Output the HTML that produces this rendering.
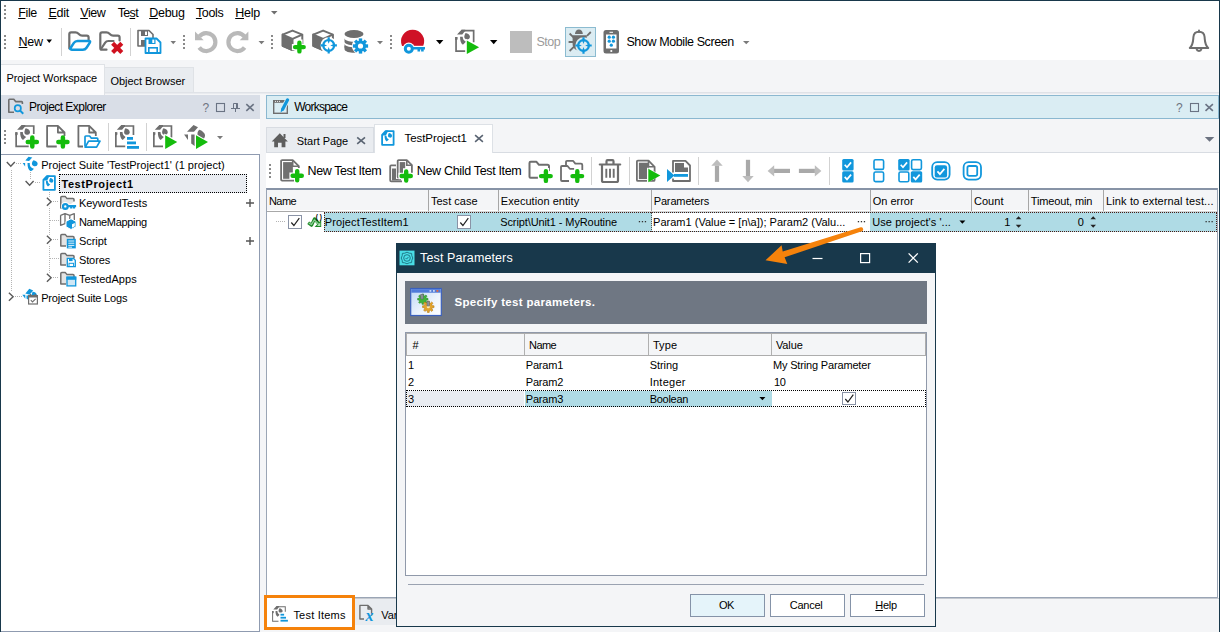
<!DOCTYPE html>
<html><head><meta charset="utf-8"><title>Test Parameters</title>
<style>
html,body{margin:0;padding:0;}
body{width:1220px;height:632px;position:relative;overflow:hidden;background:#fff;font-family:"Liberation Sans",sans-serif;font-size:12px;color:#000;}
.a{position:absolute;box-sizing:border-box;}
.t{position:absolute;white-space:nowrap;line-height:1;}
u{text-decoration:underline;text-decoration-thickness:1px;text-underline-offset:1px;}
svg{position:absolute;overflow:visible;left:0;top:0;}
</style></head><body>
<div id="main">
<div class="a" style="left:0px;top:0px;width:1220px;height:1px;background:#18384b;"></div>
<div class="a" style="left:0px;top:0px;width:1px;height:632px;background:#18384b;"></div>
<div class="a" style="left:1219px;top:0px;width:1px;height:632px;background:#18384b;"></div>
<div class="a" style="left:1px;top:60px;width:1218px;height:572px;background:#f4f5f7;"></div>
<div class="a" style="left:1px;top:64px;width:104px;height:31px;background:#fcfcfd;border:1px solid #dfe2e6;border-left:none;border-bottom:none;"></div>
<div class="a" style="left:105px;top:67px;width:89px;height:26px;background:#e9ecf0;border:1px solid #dfe2e6;border-left:none;border-bottom:none;"></div>
<div class="a" style="left:105px;top:92px;width:1114px;height:1px;background:#dfe2e7;"></div>
<div class="a" style="left:105px;top:93px;width:1114px;height:1px;background:#e9ebef;"></div>
<div class="a" style="left:1px;top:95px;width:259px;height:24px;background:#d9dee7;"></div>
<div class="a" style="left:1px;top:119px;width:259px;height:35px;background:#fff;"></div>
<div class="a" style="left:1px;top:154px;width:259px;height:478px;background:#fff;border:1px solid #8f9bb0;border-left:none;"></div>
<div class="a" style="left:59px;top:174px;width:188px;height:19px;background:#e9ecf1;border:1px dotted #000;"></div>
<div class="a" style="left:266px;top:95px;width:953px;height:24px;background:#daedf3;border:1px solid #8bb8d0;"></div>
<div class="a" style="left:266px;top:127px;width:108px;height:26px;background:#e9ecf0;border:1px solid #d8dce2;border-bottom:none;"></div>
<div class="a" style="left:266px;top:152px;width:953px;height:1px;background:#d8dce2;"></div>
<div class="a" style="left:266px;top:153px;width:953px;height:445px;background:#fff;"></div>
<div class="a" style="left:374px;top:124px;width:119px;height:29px;background:#fff;border:1px solid #dde1e6;border-bottom:none;"></div>
<div class="a" style="left:266px;top:188px;width:952px;height:410px;background:#fff;border:1px solid #9aa5b5;border-top:2px solid #8793a6;"></div>
<div class="a" style="left:267px;top:190px;width:950px;height:20px;background:#f4f5f7;"></div>
<div class="a" style="left:267px;top:210px;width:950px;height:1px;background:#fff;"></div>
<div class="a" style="left:267px;top:211px;width:57px;height:1px;background:#a8a8a8;"></div>
<div class="a" style="left:324px;top:211px;width:893px;height:1px;background:#d6d6d6;"></div>
<div class="a" style="left:428px;top:190px;width:1px;height:21px;background:#a6a6a6;"></div>
<div class="a" style="left:498px;top:190px;width:1px;height:21px;background:#a6a6a6;"></div>
<div class="a" style="left:651px;top:190px;width:1px;height:21px;background:#a6a6a6;"></div>
<div class="a" style="left:870px;top:190px;width:1px;height:21px;background:#a6a6a6;"></div>
<div class="a" style="left:971px;top:190px;width:1px;height:21px;background:#a6a6a6;"></div>
<div class="a" style="left:1028px;top:190px;width:1px;height:21px;background:#a6a6a6;"></div>
<div class="a" style="left:1103px;top:190px;width:1px;height:21px;background:#a6a6a6;"></div>
<div class="a" style="left:324px;top:212px;width:893px;height:20px;background:#afdbe5;"></div>
<div class="a" style="left:652px;top:213px;width:218px;height:18px;background:#fff;"></div>
<div class="a" style="left:324px;top:212px;width:893px;height:20px;border:1px dotted #4a1a12;"></div>
<div class="a" style="left:651px;top:212px;width:1px;height:20px;border-left:1px dotted #555;"></div>
<div class="a" style="left:288px;top:215px;width:14px;height:14px;background:#fff;border:1px solid #8a93a6;"></div>
<div class="a" style="left:457px;top:215px;width:14px;height:14px;background:#fff;border:1px solid #8a93a6;"></div>
<div class="a" style="left:266px;top:598px;width:953px;height:1px;background:#c5c9d0;"></div>
<div class="a" style="left:355px;top:599px;width:60px;height:26px;background:#e9ecf0;"></div>
<div class="a" style="left:266px;top:598px;width:89px;height:30px;background:#fff;"></div>
<svg width="1220" height="632" viewBox="0 0 1220 632">
<rect x="4" y="5" width="2" height="2" fill="#8a8a8a"/><rect x="4" y="9" width="2" height="2" fill="#8a8a8a"/><rect x="4" y="13" width="2" height="2" fill="#8a8a8a"/><rect x="4" y="17" width="2" height="2" fill="#8a8a8a"/>
<rect x="4" y="35" width="2" height="2" fill="#8a8a8a"/><rect x="4" y="39" width="2" height="2" fill="#8a8a8a"/><rect x="4" y="43" width="2" height="2" fill="#8a8a8a"/><rect x="4" y="47" width="2" height="2" fill="#8a8a8a"/>
<rect x="183" y="35" width="2" height="2" fill="#8a8a8a"/><rect x="183" y="39" width="2" height="2" fill="#8a8a8a"/><rect x="183" y="43" width="2" height="2" fill="#8a8a8a"/><rect x="183" y="47" width="2" height="2" fill="#8a8a8a"/>
<rect x="271" y="35" width="2" height="2" fill="#8a8a8a"/><rect x="271" y="39" width="2" height="2" fill="#8a8a8a"/><rect x="271" y="43" width="2" height="2" fill="#8a8a8a"/><rect x="271" y="47" width="2" height="2" fill="#8a8a8a"/>
<rect x="390" y="35" width="2" height="2" fill="#8a8a8a"/><rect x="390" y="39" width="2" height="2" fill="#8a8a8a"/><rect x="390" y="43" width="2" height="2" fill="#8a8a8a"/><rect x="390" y="47" width="2" height="2" fill="#8a8a8a"/>
<rect x="4" y="130" width="2" height="2" fill="#8a8a8a"/><rect x="4" y="134" width="2" height="2" fill="#8a8a8a"/><rect x="4" y="138" width="2" height="2" fill="#8a8a8a"/><rect x="4" y="142" width="2" height="2" fill="#8a8a8a"/>
<rect x="269" y="164" width="2" height="2" fill="#8a8a8a"/><rect x="269" y="168" width="2" height="2" fill="#8a8a8a"/><rect x="269" y="172" width="2" height="2" fill="#8a8a8a"/><rect x="269" y="176" width="2" height="2" fill="#8a8a8a"/>
<rect x="61" y="28" width="1" height="28" fill="#d2d2d2"/>
<rect x="130" y="28" width="1" height="28" fill="#d2d2d2"/>
<rect x="108" y="123" width="1" height="28" fill="#d2d2d2"/>
<rect x="146" y="123" width="1" height="28" fill="#d2d2d2"/>
<rect x="591" y="157" width="1" height="28" fill="#d2d2d2"/>
<rect x="629" y="157" width="1" height="28" fill="#d2d2d2"/>
<rect x="698" y="157" width="1" height="28" fill="#d2d2d2"/>
<rect x="829" y="157" width="1" height="28" fill="#d2d2d2"/>
<path d="M271 11 H277.5 L274.25 14.5 Z" fill="#6e6e6e"/>
<path d="M46.5 39.5 H52 L49.25 43 Z" fill="#000"/>
<path d="M170.5 41 H176 L173.25 44.2 Z" fill="#7a7a7a"/>
<path d="M258.5 41 H264.5 L261.5 44.2 Z" fill="#7a7a7a"/>
<path d="M377 41 H383 L380 44.2 Z" fill="#7a7a7a"/>
<path d="M436 40 H443.4 L439.7 44.3 Z" fill="#000"/>
<path d="M490 40 H497.4 L493.7 44.3 Z" fill="#000"/>
<path d="M743 41 H749.5 L746.25 44.2 Z" fill="#7a7a7a"/>
<path d="M217 136 H223 L220 139.2 Z" fill="#7a7a7a"/>
<path d="M1204.8 137 H1214.3 L1209.55 141.8 Z" fill="#6b7280"/>
<path d="M959.4 220.5 H965.4 L962.4 223.7 Z" fill="#000"/>
<g fill="none" stroke-linecap="round" stroke-linejoin="round"><path d="M69.30 48.50 L69.30 34.20 Q69.30 32.40 71.10 32.40 L75.50 32.40 Q77.30 32.40 78.53 33.71 L79.07 34.29 Q80.30 35.60 82.10 35.60 L86.80 35.60 Q88.60 35.60 88.60 37.40 L88.60 40.00" stroke="#6e6e6e" stroke-width="2.200"/><path d="M71.80 49.70 Q69.40 49.70 70.72 47.70 L73.88 42.90 Q75.20 40.90 77.60 40.90 L88.60 40.90 Q91.00 40.90 89.68 42.90 L86.52 47.70 Q85.20 49.70 82.80 49.70 Z" stroke="#1197dc" stroke-width="2.500"/></g>
<g fill="none" stroke-linecap="round" stroke-linejoin="round"><path d="M106.50 49.70 L102.10 49.70 Q100.30 49.70 100.30 47.90 L100.30 34.20 Q100.30 32.40 102.10 32.40 L106.50 32.40 Q108.30 32.40 109.53 33.71 L110.07 34.29 Q111.30 35.60 113.10 35.60 L117.80 35.60 Q119.60 35.60 119.60 37.40 L119.60 40.50" stroke="#6e6e6e" stroke-width="2.200"/><path d="M101.00 49.00 L105.20 42.67 Q106.30 41.00 108.30 41.00 L113.50 41.00" stroke="#6e6e6e" stroke-width="2.200"/><path d="M112.600 43.300 L121.800 52.500 M121.800 43.300 L112.600 52.500" stroke="#d0111f" stroke-width="4.200" stroke-linecap="butt"/></g>

<g>
<path d="M138 30.500 H149 L153 34.500 V46 H138 Z" fill="#fff" stroke="#6e6e6e" stroke-width="1.600" stroke-linejoin="round"/>
<rect x="141" y="31" width="7" height="5" fill="#6e6e6e"/>
<rect x="145" y="31.600" width="2" height="3.400" fill="#fff"/>
<rect x="141" y="40" width="5" height="6" fill="#6e6e6e"/>
<path d="M145.500 38.500 H156.500 L160.500 42.500 V53 H145.500 Z" fill="#fff" stroke="#1197dc" stroke-width="1.800" stroke-linejoin="round"/>
<rect x="148.500" y="39" width="7" height="5" fill="#1197dc"/>
<rect x="152.300" y="39.600" width="2" height="3.400" fill="#fff"/>
<rect x="148.800" y="47.800" width="8.400" height="5" fill="#fff" stroke="#1197dc" stroke-width="1.600"/>
</g>
<g fill="none" stroke="#b9b9b9" stroke-width="4.200">
<path d="M199.400 36.400 A9 9 0 1 1 199.200 47.500"/>
<path d="M244.400 36.400 A9 9 0 1 0 244.600 47.500"/>
</g>
<path d="M195 31.600 V40.300 H203.700 Z" fill="#b9b9b9"/>
<path d="M248.400 31.600 V40.300 H239.700 Z" fill="#b9b9b9"/>

<g transform="translate(0 0)">
<path d="M292.500 30.600 L302.300 34.600 V45.800 L292.500 50 L282.700 45.800 V34.600 Z" fill="#fff" stroke="#6e6e6e" stroke-width="2" stroke-linejoin="round"/>
<path d="M282.700 34.600 L292.500 38.800 V50 L282.700 45.800 Z" fill="#6e6e6e" stroke="#6e6e6e" stroke-width="2" stroke-linejoin="round"/>
<path d="M292.500 38.800 L302.300 34.600" stroke="#6e6e6e" stroke-width="2"/>
</g>
<path d="M299.4 39.6 V54.6 M291.9 47.1 H306.9" stroke="#fff" stroke-width="6.4" fill="none"/><path d="M299.4 42.8 V51.4 M295.1 47.1 H303.7" stroke="#14bc0c" stroke-width="4.4" fill="none" stroke-linecap="round"/>
<g transform="translate(30.6 0)">
<path d="M292.500 30.600 L302.300 34.600 V45.800 L292.500 50 L282.700 45.800 V34.600 Z" fill="#fff" stroke="#6e6e6e" stroke-width="2" stroke-linejoin="round"/>
<path d="M282.700 34.600 L292.500 38.800 V50 L282.700 45.800 Z" fill="#6e6e6e" stroke="#6e6e6e" stroke-width="2" stroke-linejoin="round"/>
<path d="M292.500 38.800 L302.300 34.600" stroke="#6e6e6e" stroke-width="2"/>
</g>
<g transform="translate(328.7 45.4)"><circle r="8.200" fill="#fff"/>
<circle r="5.400" fill="none" stroke="#1197dc" stroke-width="2.200"/>
<path d="M-1.100 -8.200 H1.100 V-4.500 L0 -1.600 L-1.100 -4.500 Z M-1.100 8.200 H1.100 V4.500 L0 1.600 L-1.100 4.500 Z M-8.200 -1.100 V1.100 H-4.500 L-1.600 0 L-4.500 -1.100 Z M8.200 -1.100 V1.100 H4.500 L1.600 0 L4.500 -1.100 Z" fill="#1197dc"/></g>

<g>
<ellipse cx="354" cy="34" rx="9.500" ry="4" fill="#6e6e6e"/>
<path d="M344.500 38 c0 5 19 5 19 0 v3.500 c0 5 -19 5 -19 0z" fill="#6e6e6e"/>
<path d="M344.500 43.500 c0 5 19 5 19 0 v3.500 c0 5 -19 5 -19 0z" fill="#6e6e6e"/>
<path d="M344.500 49 c0 4 12 4.500 14 3 v-5 c-3 1.500 -14 1 -14 -1.500z" fill="#6e6e6e"/>
<circle cx="360.500" cy="46" r="8.600" fill="#fff"/>
<g transform="translate(360.500 46)" fill="#1197dc">
<circle r="5.600"/>
<rect x="-1.700" y="-7.600" width="3.400" height="15.200"/><rect x="-1.700" y="-7.600" width="3.400" height="15.200" transform="rotate(45)"/><rect x="-1.700" y="-7.600" width="3.400" height="15.200" transform="rotate(90)"/><rect x="-1.700" y="-7.600" width="3.400" height="15.200" transform="rotate(135)"/>
<circle r="2.600" fill="#fff"/>
</g>
</g>
<g>
<path d="M402 46 A11.600 11.600 0 1 1 423.200 46 Z" fill="#cf1126"/>
<circle cx="408.800" cy="48.800" r="6.200" fill="#fff"/><rect x="411" y="45.800" width="15.500" height="7" fill="#fff"/>
<circle cx="408.800" cy="48.800" r="3.500" fill="none" stroke="#1197dc" stroke-width="3"/>
<path d="M412.500 48.200 H425 M418.800 48.200 V51.600 M422.400 48.200 V51.600" stroke="#1197dc" stroke-width="2.600" fill="none"/>
</g>

<g transform="translate(455.2 29.8) scale(1)">
<path d="M10 21.300 H0.850 V7.200" fill="none" stroke="#6e6e6e" stroke-width="1.7"/>
<path d="M6.300 0.900 H18.450 V12.5" fill="none" stroke="#6e6e6e" stroke-width="1.7"/>
<path d="M1.800 4.700 L6.300 0 H10 V1.800 H9.400 L7.100 4.700 Z" fill="#6e6e6e"/>
<path d="M0 7.100 H2.400 V9.400 L1.700 10.200 H0 Z" fill="#6e6e6e"/>
<path d="M10.400 3.200 C12.600 3.500 14.800 5 14.800 7.300 A2.850 2.850 0 1 1 9.150 6.300 C9.400 5 9.900 4 10.400 3.200 Z" fill="#6e6e6e"/>
<path d="M4.900 7 L7.500 7 C7.500 9.300 8.600 11 10.800 12 L7.700 15 C5.600 13.600 4.700 10.400 4.900 7 Z" fill="#6e6e6e"/>
</g>
<path d="M465.800 38.800 L481 47.300 L465.800 55.800 Z" fill="#fff"/>
<path d="M466.8 40.5 L479.1 47.3 L466.8 54.1 Z" fill="#14bc0c"/>
<rect x="510" y="31" width="22" height="22" fill="#bdbdbd"/>
<rect x="565.500" y="27.500" width="30" height="29" fill="#dbecf2" stroke="#8bbbd0" stroke-width="1"/>
<g>
<path d="M575 33.900 a3.900 4.400 0 0 1 7.800 0z" fill="#6e6e6e"/>
<path d="M572.600 35.200 H586.800 V44 c0 9 -14.200 9 -14.200 0z" fill="#6e6e6e"/>
<path d="M568.600 42 H573 M569.600 33.500 L573.500 37.400 M569.600 51 L573.800 46.800 M590.800 32 L587 35.800" stroke="#6e6e6e" stroke-width="1.800" fill="none"/>
</g>
<g transform="translate(583.5 45.5)"><circle r="8.200" fill="#dbecf2"/>
<circle r="5.400" fill="none" stroke="#1197dc" stroke-width="2.200"/>
<path d="M-1.100 -8.200 H1.100 V-4.500 L0 -1.600 L-1.100 -4.500 Z M-1.100 8.200 H1.100 V4.500 L0 1.600 L-1.100 4.500 Z M-8.200 -1.100 V1.100 H-4.500 L-1.600 0 L-4.500 -1.100 Z M8.200 -1.100 V1.100 H4.500 L1.600 0 L4.500 -1.100 Z" fill="#1197dc"/></g>
<g>
<rect x="603.500" y="30" width="15.500" height="23.500" rx="2.500" fill="#6e6e6e"/>
<rect x="606" y="34.500" width="10.500" height="14" fill="#fff"/>
<rect x="609.500" y="31.800" width="3.500" height="1" fill="#fff"/>
<circle cx="611.300" cy="51" r="1.100" fill="#fff"/>
<g fill="#1197dc"><circle cx="609.200" cy="37.200" r="1.600"/><circle cx="613.400" cy="37.200" r="1.600"/><circle cx="609.200" cy="41.200" r="1.600"/><circle cx="613.400" cy="41.200" r="1.600"/><circle cx="611.300" cy="45.200" r="1.600"/></g>
</g>
<g fill="none" stroke="#6e6e6e" stroke-width="2" stroke-linejoin="round">
<path d="M1189.800 48 c3.500 -3.500 3.300 -7 3.600 -11 c0.300 -3.700 2.700 -5.200 5.600 -5.200 c2.900 0 5.300 1.500 5.600 5.200 c0.300 4 0.100 7.500 3.600 11 z"/>
<path d="M1199 32 V30.500" stroke-linecap="round"/>
<path d="M1196.500 49 a2.600 2.600 0 0 0 5 0" />
</g>
<g fill="none" stroke="#6a7383" stroke-width="1"><rect x="216.5" y="103.500" width="8" height="8" stroke-width="1.100"/><path d="M231 108.500 H240 M235.5 108.500 V112 M233.5 108 V103.500 H237.5 V108"/><path d="M237 103.500 V108" stroke-width="2"/><path d="M246.3 104.200 l7.400 6.600 M253.7 104.200 l-7.400 6.600" stroke-width="1.600"/></g>
<g fill="none" stroke="#6a7383" stroke-width="1"><rect x="1190.5" y="103.500" width="8" height="8" stroke-width="1.100"/><path d="M1205.5 104.200 l7.400 6.600 M1212.9 104.200 l-7.400 6.600" stroke-width="1.600"/></g>
<g fill="none" stroke-linejoin="round">
<path d="M14 112.300 H8.800 V100 a0.800 0.800 0 0 1 0.800 -0.800 H13.800 L15.600 101.600 H21.600 a0.800 0.800 0 0 1 0.800 0.800 V104" stroke="#6e6e6e" stroke-width="1.600"/>
<circle cx="17.800" cy="108.200" r="3.100" stroke="#1197dc" stroke-width="1.700"/>
<path d="M20.200 110.700 L23.300 113.700" stroke="#1197dc" stroke-width="1.900"/>
</g>
<g>
<rect x="273.700" y="100.700" width="13.600" height="12.600" fill="none" stroke="#6e6e6e" stroke-width="1.400"/>
<rect x="273" y="100" width="15" height="2.800" fill="#6e6e6e"/>
<path d="M275 101.400 h1 M277 101.400 h1 M279 101.400 h1" stroke="#fff" stroke-width="0.900"/>
<path d="M282.600 109.400 L287.600 99.800" stroke="#daedf3" stroke-width="5" stroke-linecap="round"/>
<path d="M282.800 109 L287.600 99.800" stroke="#1197dc" stroke-width="3.200" stroke-linecap="round"/>
<path d="M281.200 108.200 L284.200 109.800 L280.600 112.400 Z" fill="#1197dc"/>
</g>
<g transform="translate(15.3 125.1) scale(1)">
<path d="M13.4 21.300 H0.850 V7.200" fill="none" stroke="#6e6e6e" stroke-width="1.7"/>
<path d="M6.300 0.900 H18.450 V9" fill="none" stroke="#6e6e6e" stroke-width="1.7"/>
<path d="M1.800 4.700 L6.300 0 H10 V1.800 H9.400 L7.100 4.700 Z" fill="#6e6e6e"/>
<path d="M0 7.100 H2.400 V9.400 L1.700 10.200 H0 Z" fill="#6e6e6e"/>
<path d="M10.400 3.200 C12.600 3.500 14.800 5 14.800 7.300 A2.850 2.850 0 1 1 9.150 6.300 C9.400 5 9.900 4 10.400 3.200 Z" fill="#6e6e6e"/>
<path d="M4.900 7 L7.500 7 C7.500 9.300 8.600 11 10.800 12 L7.700 15 C5.600 13.600 4.700 10.400 4.900 7 Z" fill="#6e6e6e"/>
</g>
<path d="M32.3 137.45 V146.55 M27.75 142 H36.85" stroke="#14bc0c" stroke-width="4.5" fill="none" stroke-linecap="round"/>
<path d="M56.76 146.5 H47.1 V125.9 H57.9 L64.5 132.5 V136 M57.9 125.9 V132.5 H64.5" fill="none" stroke="#6e6e6e" stroke-width="1.8" stroke-linejoin="round"/>
<path d="M62.9 137.45 V146.55 M58.35 142 H67.45" stroke="#14bc0c" stroke-width="4.5" fill="none" stroke-linecap="round"/>
<path d="M83 146.5 H78.4 V125.9 H89.2 L95.8 132.5 V136 M89.2 125.9 V132.5 H95.8" fill="none" stroke="#6e6e6e" stroke-width="1.8" stroke-linejoin="round"/>
<g fill="#fff" stroke="#1197dc" stroke-width="1.700" stroke-linejoin="round">
<path d="M85 146.500 V136.800 a0.800 0.800 0 0 1 0.800 -0.800 H89.600 L91.400 138.200 H97 a0.800 0.800 0 0 1 0.800 0.800 V141"/>
<path d="M85.200 147.200 L88.600 141.200 H100 L96.600 147.200 Z"/>
</g>
<g transform="translate(115 125.1) scale(1)">
<path d="M10.5 21.300 H0.850 V7.200" fill="none" stroke="#6e6e6e" stroke-width="1.7"/>
<path d="M6.300 0.900 H18.450 V10" fill="none" stroke="#6e6e6e" stroke-width="1.7"/>
<path d="M1.800 4.700 L6.300 0 H10 V1.800 H9.400 L7.100 4.700 Z" fill="#6e6e6e"/>
<path d="M0 7.100 H2.400 V9.400 L1.700 10.200 H0 Z" fill="#6e6e6e"/>
<path d="M10.400 3.200 C12.600 3.500 14.800 5 14.800 7.300 A2.850 2.850 0 1 1 9.150 6.300 C9.400 5 9.900 4 10.400 3.200 Z" fill="#6e6e6e"/>
<path d="M4.900 7 L7.500 7 C7.500 9.300 8.600 11 10.800 12 L7.700 15 C5.600 13.600 4.700 10.400 4.900 7 Z" fill="#6e6e6e"/>
</g>
<rect x="125.500" y="135.500" width="15" height="14.500" fill="#fff"/>
<g fill="#1197dc"><rect x="127" y="137" width="6" height="2.800"/><rect x="127" y="141.500" width="9" height="2.800"/><rect x="127" y="146" width="12" height="2.800"/></g>
<g transform="translate(153 125.1) scale(1)">
<path d="M10 21.300 H0.850 V7.200" fill="none" stroke="#6e6e6e" stroke-width="1.7"/>
<path d="M6.300 0.900 H18.450 V12.5" fill="none" stroke="#6e6e6e" stroke-width="1.7"/>
<path d="M1.800 4.700 L6.300 0 H10 V1.800 H9.400 L7.100 4.700 Z" fill="#6e6e6e"/>
<path d="M0 7.100 H2.400 V9.400 L1.700 10.200 H0 Z" fill="#6e6e6e"/>
<path d="M10.400 3.200 C12.600 3.500 14.800 5 14.800 7.300 A2.850 2.850 0 1 1 9.150 6.300 C9.400 5 9.900 4 10.400 3.200 Z" fill="#6e6e6e"/>
<path d="M4.900 7 L7.500 7 C7.500 9.300 8.600 11 10.800 12 L7.700 15 C5.600 13.600 4.700 10.400 4.900 7 Z" fill="#6e6e6e"/>
</g>
<path d="M164.200 133.500 L179 142 L164.200 150.600 Z" fill="#fff"/>
<path d="M165.2 135.2 L177.2 142.1 L165.2 149 Z" fill="#14bc0c"/>
<g transform="translate(183.8 125) scale(1)" fill="#6e6e6e">
<path d="M3.200 6.800 L9.700 0 L14.200 2.300 L10.200 6.800 Z"/>
<path d="M0.300 9.400 H4.200 V15 Z"/>
<path d="M7.400 9.400 H10.800 V21 L7.400 18.500 Z"/>
<path d="M15.400 4.800 C17.800 5.200 21.200 8.200 21.200 10.400 C21.200 12.200 20.200 13.800 18.600 14.800 L13.600 9.600 C13.600 7.600 14.200 5.900 15.400 4.800 Z"/>
</g>
<path d="M195 133.500 L210 142 L195 150.600 Z" fill="#fff"/>
<path d="M196 135.2 L208 142.1 L196 149 Z" fill="#14bc0c"/>
<path d="M11.5 170 V291" stroke="#b4b4b4" stroke-width="1" stroke-dasharray="1 1" fill="none"/>
<path d="M16 163.5 H22" stroke="#b4b4b4" stroke-width="1" stroke-dasharray="1 1" fill="none"/>
<path d="M30.5 172 V180" stroke="#b4b4b4" stroke-width="1" stroke-dasharray="1 1" fill="none"/>
<path d="M35 182.5 H41" stroke="#b4b4b4" stroke-width="1" stroke-dasharray="1 1" fill="none"/>
<path d="M49.5 192 V277" stroke="#b4b4b4" stroke-width="1" stroke-dasharray="1 1" fill="none"/>
<path d="M53 201.5 H59" stroke="#b4b4b4" stroke-width="1" stroke-dasharray="1 1" fill="none"/>
<path d="M50 220.5 H59" stroke="#b4b4b4" stroke-width="1" stroke-dasharray="1 1" fill="none"/>
<path d="M53 239.5 H59" stroke="#b4b4b4" stroke-width="1" stroke-dasharray="1 1" fill="none"/>
<path d="M50 258.5 H59" stroke="#b4b4b4" stroke-width="1" stroke-dasharray="1 1" fill="none"/>
<path d="M53 277.5 H59" stroke="#b4b4b4" stroke-width="1" stroke-dasharray="1 1" fill="none"/>
<path d="M15 296.5 H22" stroke="#b4b4b4" stroke-width="1" stroke-dasharray="1 1" fill="none"/>
<rect x="6" y="160" width="10" height="9" fill="#fff"/>
<rect x="25" y="179" width="10" height="9" fill="#fff"/>
<path d="M6.8 162 l4 4.300 l4 -4.300" fill="none" stroke="#5a5a5a" stroke-width="1.400"/>
<path d="M25.6 181 l4 4.300 l4 -4.300" fill="none" stroke="#5a5a5a" stroke-width="1.400"/>
<rect x="46" y="196.8" width="7" height="10" fill="#fff"/>
<path d="M46.9 197.8 l4.200 4 l-4.200 4" fill="none" stroke="#5a5a5a" stroke-width="1.400"/>
<rect x="46" y="234.8" width="7" height="10" fill="#fff"/>
<path d="M46.9 235.8 l4.200 4 l-4.200 4" fill="none" stroke="#5a5a5a" stroke-width="1.400"/>
<rect x="46" y="272.8" width="7" height="10" fill="#fff"/>
<path d="M46.9 273.8 l4.200 4 l-4.200 4" fill="none" stroke="#5a5a5a" stroke-width="1.400"/>
<rect x="8" y="291.8" width="7" height="10" fill="#fff"/>
<path d="M8.9 292.8 l4.200 4 l-4.200 4" fill="none" stroke="#5a5a5a" stroke-width="1.400"/>
<g transform="translate(22.7 156.8)" fill="#1197dc">
<path d="M2.600 3.800 L5.800 0 L9.600 0.700 L6.300 4.100 Z"/>
<path d="M0 6.300 H2.400 V9.600 Z"/>
<path d="M4.800 6.200 H7.100 C6.900 9 7.600 10.500 11.200 12 C10.100 13.500 8.800 14.300 7.600 14.300 C5.500 13 4.800 10 4.800 6.200Z"/>
<path d="M10.800 3.500 C13 3.700 15 5.200 15 7.100 A2.850 2.850 0 1 1 9.300 6 C9.600 5 10.200 4.100 10.800 3.500Z"/>
</g>
<g transform="translate(42.5 175.2)">
<path d="M0.900 4.600 L4.400 0.900 H12.400 V14.600 H0.900 Z" fill="#fff" stroke="#1197dc" stroke-width="1.800" stroke-linejoin="round"/>
<path d="M0.400 5.200 L4.600 0.400 H7.200 L4.700 5.200 Z" fill="#1197dc"/>
<path d="M7.700 2.900 C9.400 3.100 10.900 4.200 10.900 5.700 A2.050 2.050 0 1 1 6.800 5 C7 4.200 7.300 3.500 7.700 2.900 Z" fill="#1197dc"/>
<path d="M3.400 5.600 L5.300 5.600 C5.300 7.300 6.100 8.500 7.700 9.300 L5.500 11.400 C4 10.400 3.300 8 3.400 5.600 Z" fill="#1197dc"/>
</g>
<path d="M66 207.9 H60.8 V197.4 a1 1 0 0 1 1 -1 H65.2 l1.800 2.200 H73 a1 1 0 0 1 1 1 V201.6" fill="#e4e4e4" stroke="#6e6e6e" stroke-width="1.500" stroke-linejoin="round"/>
<g><circle cx="65.300" cy="206.400" r="4.300" fill="#fff"/><rect x="67" y="204.200" width="9.800" height="5.200" fill="#fff"/><circle cx="65.300" cy="206.400" r="2.350" fill="none" stroke="#1197dc" stroke-width="2.300"/><path d="M68 206.100 H76.100 M71.200 206.100 V208.600 M74 206.100 V208.600" stroke="#1197dc" stroke-width="2.200" fill="none"/></g>
<g><path d="M60.600 215.300 L65 213.700 L69.800 215.300 L74.300 213.700 V220 M60.600 215.300 V225.300 L65 223.700 V213.700 M69.800 215.300 V219" fill="none" stroke="#6e6e6e" stroke-width="1.300" stroke-linejoin="round"/>
<path d="M66 221.400 L71 218.700 L76 221.400 V226.800 L71 229.500 L66 226.800 Z" fill="#1197dc" stroke="#fff" stroke-width="1"/>
<path d="M72 224.300 L74.800 222.900 V226.300 L72 227.800 Z" fill="#fff"/></g>
<path d="M66 245.9 H60.8 V235.4 a1 1 0 0 1 1 -1 H65.2 l1.800 2.200 H73 a1 1 0 0 1 1 1 V239.6" fill="#e4e4e4" stroke="#6e6e6e" stroke-width="1.500" stroke-linejoin="round"/>
<rect x="66.800" y="238.800" width="9" height="9.600" fill="#1197dc"/><path d="M68.300 241 H74.300 M68.300 243.200 H74.300 M68.300 245.400 H74.300 M68.300 247.200 H72" stroke="#fff" stroke-width="0.900"/>
<path d="M66 264.9 H60.8 V254.4 a1 1 0 0 1 1 -1 H65.2 l1.800 2.200 H73 a1 1 0 0 1 1 1 V258.6" fill="#e4e4e4" stroke="#6e6e6e" stroke-width="1.500" stroke-linejoin="round"/>
<path d="M67.300 258.300 H73.300 L75.300 260.300 V266.700 H67.300 Z" fill="#fff" stroke="#1197dc" stroke-width="1.300"/><rect x="69" y="258.500" width="3.600" height="2.600" fill="#1197dc"/><rect x="69" y="263.300" width="4.600" height="3.200" fill="none" stroke="#1197dc" stroke-width="1"/>
<path d="M66 283.9 H60.8 V273.4 a1 1 0 0 1 1 -1 H65.2 l1.800 2.200 H73 a1 1 0 0 1 1 1 V277.6" fill="#e4e4e4" stroke="#6e6e6e" stroke-width="1.500" stroke-linejoin="round"/>
<rect x="67" y="277.200" width="8.700" height="8.700" fill="#cfe7f5" stroke="#1197dc" stroke-width="1.300"/><rect x="66.400" y="276.600" width="9.900" height="3.200" fill="#1197dc"/>
<g fill="#1197dc"><path d="M25.400 293.400 L29.300 288.700 L33.200 290.500 L29.600 294.800 Z"/><path d="M22.300 294.700 H25.300 V298.800 Z"/><path d="M32.600 291.800 C35 292 36.800 293.400 37 295.200 H31.500 Z"/><path d="M26.500 295.600 H28.200 V299.800 L26.500 298.400Z"/></g>
<rect x="28.600" y="295.600" width="8.800" height="8.400" fill="#fff" stroke="#6e6e6e" stroke-width="1.200"/><path d="M28.600 296.400 H37.400" stroke="#6e6e6e" stroke-width="2.200"/><path d="M30.600 294 V296 M35.400 294 V296" stroke="#6e6e6e" stroke-width="1.300"/><path d="M30.800 300.200 L32.500 301.900 L35.600 298.800" fill="none" stroke="#6e6e6e" stroke-width="1.100"/>
<path d="M246 203 h8 M250 199 v8" stroke="#555" stroke-width="1.400" fill="none"/>
<path d="M246 241 h8 M250 237 v8" stroke="#555" stroke-width="1.400" fill="none"/>
<path d="M271.700 141.400 L279.800 133.200 L287.900 141.400 H285.400 V147.300 H281.600 V142.800 H278 V147.300 H274.200 V141.400 Z" fill="#5e5e5e"/><rect x="283.500" y="134" width="2" height="4" fill="#5e5e5e"/>
<path d="M357.2 137.3 l7.8 6.6 M365 137.3 l-7.8 6.6" stroke="#5a6472" stroke-width="1.6" fill="none"/>
<path d="M475.1 135.2 l7.8 6.6 M482.9 135.2 l-7.8 6.6" stroke="#5a6472" stroke-width="1.6" fill="none"/>
<g transform="translate(381.2 130.2)">
<path d="M0.900 4.600 L4.400 0.900 H12.400 V14.600 H0.900 Z" fill="#fff" stroke="#1197dc" stroke-width="1.800" stroke-linejoin="round"/>
<path d="M0.400 5.200 L4.600 0.400 H7.200 L4.700 5.200 Z" fill="#1197dc"/>
<path d="M7.700 2.900 C9.400 3.100 10.900 4.200 10.900 5.700 A2.050 2.050 0 1 1 6.800 5 C7 4.200 7.300 3.500 7.700 2.900 Z" fill="#1197dc"/>
<path d="M3.400 5.600 L5.300 5.600 C5.300 7.300 6.100 8.500 7.700 9.300 L5.500 11.400 C4 10.400 3.300 8 3.400 5.600 Z" fill="#1197dc"/>
</g>
<g transform="translate(280.2 159.2)"><path d="M1.900 0.900 H12.5 L18.6 7 V20.4 a1 1 0 0 1 -1 1 H1.900 a1 1 0 0 1 -1 -1 V1.900 a1 1 0 0 1 1 -1 Z" fill="#fff" stroke="#707070" stroke-width="1.800" stroke-linejoin="round"/>
<path d="M12.5 0.900 V7 H18.6" fill="none" stroke="#707070" stroke-width="1.600"/>
<rect x="2.900" y="2.900" width="9.75" height="16.7" fill="#707070"/></g>
<path d="M297.2 167.9 V183.5 M289.4 175.7 H305" stroke="#fff" stroke-width="6.4" fill="none"/><path d="M297.2 171.1 V180.3 M292.6 175.7 H301.8" stroke="#14bc0c" stroke-width="4.4" fill="none" stroke-linecap="round"/>
<path d="M396 165.400 H391.200 a1 1 0 0 0 -1 1 V180.300 a1 1 0 0 0 1 1 H402" fill="none" stroke="#707070" stroke-width="1.800" stroke-linejoin="round"/>
<path d="M392 168.500 h4 v10.500 h5 v1.600 h-9z" fill="#707070"/>
<g transform="translate(396.8 159.2)"><path d="M1.900 0.900 H10 L15.1 6 V17.6 a1 1 0 0 1 -1 1 H1.900 a1 1 0 0 1 -1 -1 V1.900 a1 1 0 0 1 1 -1 Z" fill="#fff" stroke="#707070" stroke-width="1.800" stroke-linejoin="round"/>
<path d="M10 0.900 V6 H15.1" fill="none" stroke="#707070" stroke-width="1.600"/>
<rect x="2.900" y="2.900" width="5.5" height="13.5" fill="#707070"/></g>
<path d="M406.2 168.2 V183.8 M398.4 176 H414" stroke="#fff" stroke-width="6.4" fill="none"/><path d="M406.2 171.4 V180.6 M401.6 176 H410.8" stroke="#14bc0c" stroke-width="4.4" fill="none" stroke-linecap="round"/>
<path d="M538.5 177.8 H530.5 a1 1 0 0 1 -1 -1 V163 a1.200 1.200 0 0 1 1.200 -1.200 H536.5 l2.500 3 H547.5 a1.500 1.500 0 0 1 1.500 1.500 V170.3" fill="none" stroke="#6e6e6e" stroke-width="2" stroke-linejoin="round" stroke-linecap="round"/>
<path d="M545.9 168.1 V184.1 M537.9 176.1 H553.9" stroke="#fff" stroke-width="6.4" fill="none"/><path d="M545.9 171.3 V180.9 M541.1 176.1 H550.7" stroke="#14bc0c" stroke-width="4.4" fill="none" stroke-linecap="round"/>
<path d="M566 165.500 V161.800 a1 1 0 0 1 1 -1 H573 l2.300 2.800 H581 a1.300 1.300 0 0 1 1.300 1.300 V170" fill="none" stroke="#6e6e6e" stroke-width="1.800" stroke-linejoin="round"/>
<path d="M569 181 H562 a1 1 0 0 1 -1 -1 V167 a1 1 0 0 1 1 -1 H567.500 l2.300 2.800 H577 a1.300 1.300 0 0 1 1.300 1.300 V171" fill="#fff" stroke="#6e6e6e" stroke-width="1.800" stroke-linejoin="round"/>
<path d="M577.3 168.1 V184.1 M569.3 176.1 H585.3" stroke="#fff" stroke-width="6.4" fill="none"/><path d="M577.3 171.3 V180.9 M572.5 176.1 H582.1" stroke="#14bc0c" stroke-width="4.4" fill="none" stroke-linecap="round"/>
<g fill="none" stroke="#6e6e6e" stroke-width="2.200" stroke-linejoin="round" stroke-linecap="round"><path d="M599.800 164.500 H620.200 M606.500 164 V161.200 a1 1 0 0 1 1 -1 H612.500 a1 1 0 0 1 1 1 V164"/><path d="M602 165 V180.500 a1.500 1.500 0 0 0 1.500 1.500 H616.500 a1.500 1.500 0 0 0 1.500 -1.500 V165"/><path d="M606.300 168.800 V177.800 M610 168.800 V177.800 M613.700 168.800 V177.800" stroke-width="1.900" stroke-linecap="butt"/></g>
<g transform="translate(636 159.8)"><path d="M1.900 0.900 H12.5 L18.6 7 V20.1 a1 1 0 0 1 -1 1 H1.900 a1 1 0 0 1 -1 -1 V1.900 a1 1 0 0 1 1 -1 Z" fill="#fff" stroke="#707070" stroke-width="1.800" stroke-linejoin="round"/>
<path d="M12.5 0.900 V7 H18.6" fill="none" stroke="#707070" stroke-width="1.600"/>
<rect x="2.900" y="2.900" width="9.75" height="16.4" fill="#707070"/></g>
<path d="M647 167.500 L661 175 L647 183 Z" fill="#fff"/>
<path d="M648.3 168.8 L660.3 175.55 L648.3 182.3 Z" fill="#14bc0c"/>
<g><path d="M673 160.900 H685.500 L690 165.500 V181 H673 Z" fill="#fff" stroke="#6e6e6e" stroke-width="1.800" stroke-linejoin="round"/><path d="M675 163 H684 V167.500 H688 V172 H675 Z" fill="#6e6e6e"/><rect x="670" y="172.500" width="18.500" height="6" fill="#fff"/><rect x="674" y="174" width="14" height="2.800" fill="#1197dc"/><path d="M667 169 L674.500 175.400 L667 182 Z" fill="#1197dc"/></g>
<rect x="714.900" y="165.500" width="4.200" height="16.400" fill="#a9a9a9"/><path d="M717 159.400 L722.700 165.800 H711.300 Z" fill="#bdbdbd"/>
<rect x="745.900" y="159.800" width="4.200" height="16.400" fill="#a9a9a9"/><path d="M748 182.300 L753.700 176 H742.300 Z" fill="#bdbdbd"/>
<rect x="774" y="168.800" width="16" height="4.200" fill="#a9a9a9"/><path d="M767.600 170.900 L774.200 165.300 V176.500 Z" fill="#bdbdbd"/>
<rect x="798.900" y="168.800" width="16" height="4.200" fill="#a9a9a9"/><path d="M821.400 170.900 L814.800 165.300 V176.500 Z" fill="#bdbdbd"/>
<rect x="842.2" y="159" width="11.4" height="11.4" rx="1.5" fill="#1197dc"/><path d="M844.708 164.7 l2.28 2.508 l4.104 -4.788" fill="none" stroke="#fff" stroke-width="1.700"/>
<rect x="842.2" y="171.2" width="11.4" height="11.4" rx="1.5" fill="#1197dc"/><path d="M844.708 176.9 l2.28 2.508 l4.104 -4.788" fill="none" stroke="#fff" stroke-width="1.700"/>
<rect x="874" y="159.8" width="9.6" height="9.6" rx="1.5" fill="#fff" stroke="#1197dc" stroke-width="1.600"/>
<rect x="874" y="172" width="9.6" height="9.6" rx="1.5" fill="#fff" stroke="#1197dc" stroke-width="1.600"/>
<rect x="898.2" y="159" width="11.4" height="11.4" rx="1.5" fill="#1197dc"/><path d="M900.708 164.7 l2.28 2.508 l4.104 -4.788" fill="none" stroke="#fff" stroke-width="1.700"/>
<rect x="911.6" y="159.8" width="9.8" height="9.8" rx="1.5" fill="#fff" stroke="#1197dc" stroke-width="1.600"/>
<rect x="899" y="172" width="9.8" height="9.8" rx="1.5" fill="#fff" stroke="#1197dc" stroke-width="1.600"/>
<rect x="910.8" y="171.2" width="11.4" height="11.4" rx="1.5" fill="#1197dc"/><path d="M913.308 176.9 l2.28 2.508 l4.104 -4.788" fill="none" stroke="#fff" stroke-width="1.700"/>
<rect x="932.200" y="162.200" width="17.400" height="17.400" rx="5" fill="#fff" stroke="#1197dc" stroke-width="1.800"/><rect x="934.7" y="165.2" width="12.4" height="12.4" rx="2.2" fill="#1197dc"/><path d="M937.428 171.4 l2.48 2.728 l4.464 -5.208" fill="none" stroke="#fff" stroke-width="1.700"/>
<rect x="963.600" y="162.200" width="17.400" height="17.400" rx="5" fill="#fff" stroke="#1197dc" stroke-width="1.800"/><rect x="967.400" y="166" width="9.800" height="9.800" rx="1.800" fill="#fff" stroke="#1197dc" stroke-width="1.800"/>
<path d="M276 221.5 H286" stroke="#b4b4b4" stroke-width="1" stroke-dasharray="1 1" fill="none"/>
<path d="M291.3 222.5 l2.600 3 l5.400 -7.400" fill="none" stroke="#222" stroke-width="1.200"/>
<path d="M460.3 222.5 l2.600 3 l5.400 -7.400" fill="none" stroke="#222" stroke-width="1.200"/>
<g><path d="M308.200 222.800 L311.600 225.200 L314.500 218.800 L318.600 223.400" fill="none" stroke="#1f8a27" stroke-width="3.200" stroke-linejoin="round"/>
<path d="M321.200 220 V226.900 H314.600 Z" fill="#1f8a27"/>
<path d="M308.800 223 L311.400 224.600 L314.400 219.800 L318.800 224.400" fill="none" stroke="#8fd098" stroke-width="1.200" stroke-linejoin="round"/>
<path d="M320.300 222.500 V226 H317 Z" fill="#b6e2bb"/>
<text x="315.800" y="218.600" font-size="6.500" font-family="Liberation Sans, sans-serif" fill="#000" font-weight="bold" style="letter-spacing:1.800px">()</text></g>
<g fill="#333"><rect x="638.8" y="221" width="1.300" height="1.300"/><rect x="641.8" y="221" width="1.300" height="1.300"/><rect x="644.8" y="221" width="1.300" height="1.300"/></g>
<g fill="#333"><rect x="857.8" y="221" width="1.300" height="1.300"/><rect x="860.8" y="221" width="1.300" height="1.300"/><rect x="863.8" y="221" width="1.300" height="1.300"/></g>
<g fill="#333"><rect x="1205.5" y="221" width="1.300" height="1.300"/><rect x="1208.5" y="221" width="1.300" height="1.300"/><rect x="1211.5" y="221" width="1.300" height="1.300"/></g>
<path d="M1015.8 219.200 l2.800 -3 l2.800 3z M1015.8 224.800 l2.800 3 l2.800 -3z" fill="#222"/>
<path d="M1090.4 219.200 l2.800 -3 l2.800 3z M1090.4 224.800 l2.800 3 l2.800 -3z" fill="#222"/>
<g transform="translate(272 606) scale(0.72)">
<path d="M9 21.300 H0.850 V7.200" fill="none" stroke="#6e6e6e" stroke-width="1.38889"/>
<path d="M6.300 0.900 H18.450 V8" fill="none" stroke="#6e6e6e" stroke-width="1.38889"/>
<path d="M1.800 4.700 L6.300 0 H10 V1.800 H9.400 L7.100 4.700 Z" fill="#6e6e6e"/>
<path d="M0 7.100 H2.400 V9.400 L1.700 10.200 H0 Z" fill="#6e6e6e"/>
<path d="M10.400 3.200 C12.600 3.500 14.800 5 14.800 7.300 A2.850 2.850 0 1 1 9.150 6.300 C9.400 5 9.900 4 10.400 3.200 Z" fill="#6e6e6e"/>
<path d="M4.900 7 L7.500 7 C7.500 9.300 8.600 11 10.800 12 L7.700 15 C5.600 13.600 4.700 10.400 4.900 7 Z" fill="#6e6e6e"/>
</g>
<rect x="279.500" y="612.500" width="9" height="9.500" fill="#fff"/><g fill="#1197dc"><rect x="280.500" y="613.800" width="3.600" height="1.800"/><rect x="280.500" y="616.800" width="5.500" height="1.800"/><rect x="280.500" y="619.800" width="7.400" height="1.800"/></g>
<path d="M364 619 H359.9 V605.4 H368 L371.6 609 V615.5 M368 605.4 V609 H371.6" fill="none" stroke="#6e6e6e" stroke-width="1.4" stroke-linejoin="round"/>
</svg>
<span class="t" style="left:18.2px;top:6.6px;font-size:12.5px;letter-spacing:-0.34px;"><u>F</u>ile</span>
<span class="t" style="left:48.4px;top:6.6px;font-size:12.5px;letter-spacing:-0.26px;"><u>E</u>dit</span>
<span class="t" style="left:80.2px;top:6.6px;font-size:12.5px;letter-spacing:-0.40px;"><u>V</u>iew</span>
<span class="t" style="left:117.7px;top:6.6px;font-size:12.5px;letter-spacing:-0.66px;">Te<u>s</u>t</span>
<span class="t" style="left:149.2px;top:6.6px;font-size:12.5px;letter-spacing:-0.27px;"><u>D</u>ebug</span>
<span class="t" style="left:195.9px;top:6.6px;font-size:12.5px;letter-spacing:-0.32px;"><u>T</u>ools</span>
<span class="t" style="left:235.2px;top:6.6px;font-size:12.5px;letter-spacing:-0.23px;"><u>H</u>elp</span>
<span class="t" style="left:18.6px;top:35.7px;font-size:12.5px;letter-spacing:-0.27px;"><u>N</u>ew</span>
<span class="t" style="left:536.4px;top:35.7px;font-size:12.5px;letter-spacing:-0.48px;color:#9b9b9b">Stop</span>
<span class="t" style="left:626.4px;top:35.7px;font-size:12.5px;letter-spacing:-0.40px;">Show Mobile Screen</span>
<span class="t" style="left:6.4px;top:72.7px;font-size:11px;letter-spacing:-0.08px;">Project Workspace</span>
<span class="t" style="left:110.4px;top:75.7px;font-size:11px;letter-spacing:-0.03px;">Object Browser</span>
<span class="t" style="left:29.0px;top:101.2px;font-size:12px;letter-spacing:-0.54px;">Project Explorer</span>
<span class="t" style="left:294.2px;top:101.2px;font-size:12px;letter-spacing:-0.76px;">Workspace</span>
<span class="t" style="left:202.4px;top:101.5px;font-size:12px;letter-spacing:0.00px;color:#6e7480">?</span>
<span class="t" style="left:1176.0px;top:101.5px;font-size:12px;letter-spacing:0.00px;color:#6e7480">?</span>
<span class="t" style="left:41.2px;top:159.7px;font-size:11px;letter-spacing:0.02px;">Project Suite 'TestProject1' (1 project)</span>
<span class="t" style="left:61.4px;top:178.7px;font-size:11px;letter-spacing:0.59px;font-weight:bold">TestProject1</span>
<span class="t" style="left:78.9px;top:197.7px;font-size:11px;letter-spacing:-0.02px;">KeywordTests</span>
<span class="t" style="left:78.9px;top:216.7px;font-size:11px;letter-spacing:-0.34px;">NameMapping</span>
<span class="t" style="left:78.9px;top:235.7px;font-size:11px;letter-spacing:-0.05px;">Script</span>
<span class="t" style="left:78.9px;top:254.7px;font-size:11px;letter-spacing:-0.08px;">Stores</span>
<span class="t" style="left:78.9px;top:273.7px;font-size:11px;letter-spacing:0.03px;">TestedApps</span>
<span class="t" style="left:41.2px;top:292.7px;font-size:11px;letter-spacing:-0.18px;">Project Suite Logs</span>
<span class="t" style="left:296.8px;top:135.7px;font-size:11px;letter-spacing:-0.06px;">Start Page</span>
<span class="t" style="left:404.6px;top:133.3px;font-size:11.5px;letter-spacing:-0.09px;">TestProject1</span>
<span class="t" style="left:307.6px;top:165.2px;font-size:12.5px;letter-spacing:-0.41px;">New Test Item</span>
<span class="t" style="left:416.8px;top:165.2px;font-size:12.5px;letter-spacing:-0.33px;">New Child Test Item</span>
<span class="t" style="left:268.9px;top:196.2px;font-size:11px;letter-spacing:-0.51px;">Name</span>
<span class="t" style="left:430.9px;top:196.2px;font-size:11px;letter-spacing:0.04px;">Test case</span>
<span class="t" style="left:500.8px;top:196.2px;font-size:11px;letter-spacing:0.05px;">Execution entity</span>
<span class="t" style="left:653.7px;top:196.2px;font-size:11px;letter-spacing:-0.14px;">Parameters</span>
<span class="t" style="left:872.7px;top:196.2px;font-size:11px;letter-spacing:-0.01px;">On error</span>
<span class="t" style="left:973.9px;top:196.2px;font-size:11px;letter-spacing:0.05px;">Count</span>
<span class="t" style="left:1030.8px;top:196.2px;font-size:11px;letter-spacing:-0.15px;">Timeout, min</span>
<span class="t" style="left:1106.0px;top:196.2px;font-size:11px;letter-spacing:0.13px;">Link to external test...</span>
<span class="t" style="left:324.7px;top:216.7px;font-size:11px;letter-spacing:0.14px;">ProjectTestItem1</span>
<span class="t" style="left:500.2px;top:216.7px;font-size:11px;letter-spacing:-0.10px;">Script\Unit1 - MyRoutine</span>
<span class="t" style="left:653.1px;top:216.7px;font-size:11px;letter-spacing:0.01px;">Param1 (Value = [n\a]); Param2 (Valu...</span>
<span class="t" style="left:872.3px;top:216.7px;font-size:11px;letter-spacing:0.06px;">Use project's '...</span>
<span class="t" style="left:1004.2px;top:216.7px;font-size:11px;letter-spacing:0.00px;">1</span>
<span class="t" style="left:1077.7px;top:216.7px;font-size:11px;letter-spacing:0.00px;">0</span>
<span class="t" style="left:293.4px;top:610.0px;font-size:11px;letter-spacing:0.21px;">Test Items</span>
<span class="t" style="left:381.3px;top:610.0px;font-size:11px;letter-spacing:-0.14px;">Var</span>
<span class="t" style="left:365.4px;top:608.0px;font-size:16px;letter-spacing:0.00px;color:#1197dc;font-family:'Liberation Serif',serif;font-style:italic;font-weight:bold">x</span>
</div>
<div id="dialog">
<div class="a" style="left:396px;top:243px;width:540px;height:384px;background:#f4f5f7;border:1px solid #18384b;"></div>
<div class="a" style="left:396px;top:243px;width:540px;height:30px;background:#18384b;"></div>
<div class="a" style="left:405px;top:281px;width:522px;height:43px;background:#6f7783;"></div>
<div class="a" style="left:405px;top:332px;width:522px;height:244px;background:#fff;border:1px solid #9099aa;"></div>
<div class="a" style="left:406px;top:333px;width:520px;height:23px;background:#f4f5f7;border:1px solid #adadad;"></div>
<div class="a" style="left:524px;top:334px;width:1px;height:21px;background:#b0b0b0;"></div>
<div class="a" style="left:648px;top:334px;width:1px;height:21px;background:#b0b0b0;"></div>
<div class="a" style="left:771px;top:334px;width:1px;height:21px;background:#b0b0b0;"></div>
<div class="a" style="left:406px;top:391px;width:118px;height:16px;background:#e9ecf1;"></div>
<div class="a" style="left:525px;top:391px;width:247px;height:16px;background:#afdbe5;"></div>
<div class="a" style="left:406px;top:390px;width:520px;height:17px;border-top:1px dotted #000;border-bottom:1px dotted #000;border-left:1px dotted #000;border-right:1px dotted #000;"></div>
<div class="a" style="left:842px;top:392px;width:14px;height:13px;background:#fff;border:1px solid #8a93a6;"></div>
<div class="a" style="left:408px;top:584px;width:516px;height:1px;background:#9aa2b1;"></div>
<div class="a" style="left:690px;top:594px;width:75px;height:23px;background:#e5f4fa;border:1px solid #8593a8;"></div>
<div class="a" style="left:770px;top:594px;width:75px;height:23px;background:#fff;border:1px solid #8593a8;"></div>
<div class="a" style="left:850px;top:594px;width:75px;height:23px;background:#fff;border:1px solid #8593a8;"></div>
<svg width="1220" height="632" viewBox="0 0 1220 632">
<rect x="399.500" y="250.600" width="15" height="14.700" fill="#4adde6"/>
<g fill="none" stroke="#1b6f80" stroke-width="0.900"><path d="M407 252.200 L409.300 253.200 L411.600 253.400 L411.800 255.700 L412.800 258 L411.800 260.300 L411.600 262.600 L409.300 262.800 L407 263.800 L404.700 262.800 L402.400 262.600 L402.200 260.300 L401.200 258 L402.200 255.700 L402.400 253.400 L404.700 253.200 Z"/><circle cx="407" cy="258" r="3.300"/><path d="M405.600 258 l1 1.100 l1.900 -2.200"/></g>
<path d="M812.500 258.500 H822.500" stroke="#fff" stroke-width="1.200"/>
<rect x="860.600" y="253.600" width="9" height="9" fill="none" stroke="#fff" stroke-width="1.200"/>
<path d="M908.6 253.4 l9.2 9.2 M917.8 253.4 l-9.2 9.2" stroke="#fff" stroke-width="1.3" fill="none"/>
<g><linearGradient id="bg1" x1="0" y1="0" x2="1" y2="1"><stop offset="0" stop-color="#bcd6f6"/><stop offset="0.600" stop-color="#eef5fd"/><stop offset="1" stop-color="#ffffff"/></linearGradient>
<rect x="410.700" y="288.500" width="30.600" height="27" fill="url(#bg1)" stroke="#3a60bd" stroke-width="1.200"/><rect x="411.300" y="289.100" width="29.400" height="3.600" fill="#4f7bd9"/>
<rect x="429.500" y="290" width="1.800" height="1.800" fill="#c8d8f4"/><rect x="433" y="290" width="1.800" height="1.800" fill="#c8d8f4"/><rect x="436.500" y="290" width="1.800" height="1.800" fill="#e8683c"/>
<path d="M427.93 298.37 L427.93 300.03 L426.44 300.06 L425.99 301.17 L427.02 302.24 L425.84 303.42 L424.77 302.39 L423.66 302.84 L423.63 304.33 L421.97 304.33 L421.94 302.84 L420.83 302.39 L419.76 303.42 L418.58 302.24 L419.61 301.17 L419.16 300.06 L417.67 300.03 L417.67 298.37 L419.16 298.34 L419.61 297.23 L418.58 296.16 L419.76 294.98 L420.83 296.01 L421.94 295.56 L421.97 294.07 L423.63 294.07 L423.66 295.56 L424.77 296.01 L425.84 294.98 L427.02 296.16 L425.99 297.23 L426.44 298.34 Z" fill="#3fb43a" stroke="#2a8a27" stroke-width="0.600"/><path d="M434.03 305.78 L434.03 307.62 L432.36 307.66 L431.85 308.89 L433.00 310.10 L431.70 311.40 L430.49 310.25 L429.26 310.76 L429.22 312.43 L427.38 312.43 L427.34 310.76 L426.11 310.25 L424.90 311.40 L423.60 310.10 L424.75 308.89 L424.24 307.66 L422.57 307.62 L422.57 305.78 L424.24 305.74 L424.75 304.51 L423.60 303.30 L424.90 302.00 L426.11 303.15 L427.34 302.64 L427.38 300.97 L429.22 300.97 L429.26 302.64 L430.49 303.15 L431.70 302.00 L433.00 303.30 L431.85 304.51 L432.36 305.74 Z" fill="#e3a42c" stroke="#b57a14" stroke-width="0.600"/>
<circle cx="428.300" cy="306.700" r="1.600" fill="#f9e7b0"/>
<rect x="420.800" y="294.200" width="2.400" height="4.800" fill="#8c9098" stroke="#5c6068" stroke-width="0.500"/><rect x="427" y="301.200" width="2.400" height="4.800" fill="#8c9098" stroke="#5c6068" stroke-width="0.500"/></g>
<path d="M759.4 397 H765.4 L762.4 400.2 Z" fill="#000"/>
<path d="M845.3 399 l2.600 3 l5.400 -7.400" fill="none" stroke="#222" stroke-width="1.200"/>
</svg>
<span class="t" style="left:420.1px;top:251.6px;font-size:12.5px;letter-spacing:0.11px;color:#fff">Test Parameters</span>
<span class="t" style="left:454.4px;top:297.2px;font-size:11.5px;letter-spacing:0.33px;color:#fff;font-weight:bold">Specify test parameters.</span>
<span class="t" style="left:412.4px;top:339.9px;font-size:11px;letter-spacing:0.00px;">#</span>
<span class="t" style="left:529.0px;top:339.9px;font-size:11px;letter-spacing:-0.54px;">Name</span>
<span class="t" style="left:652.9px;top:339.9px;font-size:11px;letter-spacing:0.11px;">Type</span>
<span class="t" style="left:775.9px;top:339.9px;font-size:11px;letter-spacing:-0.11px;">Value</span>
<span class="t" style="left:408.0px;top:359.7px;font-size:11px;letter-spacing:0.00px;">1</span>
<span class="t" style="left:525.8px;top:359.7px;font-size:11px;letter-spacing:-0.19px;">Param1</span>
<span class="t" style="left:649.7px;top:359.7px;font-size:11px;letter-spacing:-0.04px;">String</span>
<span class="t" style="left:772.9px;top:359.7px;font-size:11px;letter-spacing:-0.16px;">My String Parameter</span>
<span class="t" style="left:408.0px;top:376.7px;font-size:11px;letter-spacing:0.00px;">2</span>
<span class="t" style="left:525.8px;top:376.7px;font-size:11px;letter-spacing:-0.19px;">Param2</span>
<span class="t" style="left:649.7px;top:376.7px;font-size:11px;letter-spacing:0.25px;">Integer</span>
<span class="t" style="left:773.9px;top:376.7px;font-size:11px;letter-spacing:-0.22px;">10</span>
<span class="t" style="left:408.0px;top:393.7px;font-size:11px;letter-spacing:0.00px;">3</span>
<span class="t" style="left:525.8px;top:393.7px;font-size:11px;letter-spacing:-0.19px;">Param3</span>
<span class="t" style="left:649.7px;top:393.7px;font-size:11px;letter-spacing:-0.27px;">Boolean</span>
<span class="t" style="left:719.1px;top:600.2px;font-size:11px;letter-spacing:-0.65px;">OK</span>
<span class="t" style="left:789.7px;top:600.2px;font-size:11px;letter-spacing:-0.24px;">Cancel</span>
<span class="t" style="left:875.3px;top:600.2px;font-size:11px;letter-spacing:-0.31px;"><u>H</u>elp</span>
</div>
<div class="a" style="left:264px;top:595px;width:91px;height:35px;border:3px solid #f5820b;"></div>
<svg width="1220" height="632" viewBox="0 0 1220 632"><path d="M765.500 260.300 L781.600 245.300 L782.700 251.500 L860.700 227.300 A2.050 2.050 0 0 1 861.900 231.200 L784.600 257.300 L787.300 263.900 Z" fill="#f5820b"/></svg>
</body></html>
